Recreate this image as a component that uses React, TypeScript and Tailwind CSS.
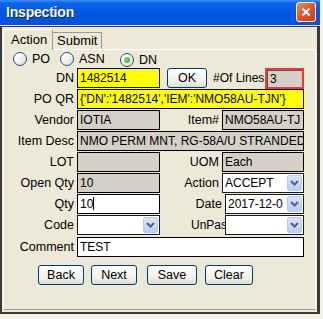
import React from 'react';

const font = { fontFamily: '"Liberation Sans", Arial, sans-serif' };

const Radio = ({ label, checked }: { label: string; checked?: boolean }) => (
  <div className="flex items-center gap-[5px]">
    <div className="w-[14px] h-[14px] rounded-full border border-[#1c5180] bg-[linear-gradient(135deg,#ffffff_20%,#dcd9ce_100%)] flex items-center justify-center">
      {checked && <div className="w-[6px] h-[6px] rounded-full bg-[radial-gradient(circle_at_35%_35%,#7fe07a,#21a121)]" />}
    </div>
    <span className="text-[12.5px] leading-none">{label}</span>
  </div>
);

const Label = ({ text, w }: { text: string; w: string }) => (
  <div className={`${w} text-right pr-[3px] text-[12.5px] leading-[20px] whitespace-nowrap`}>{text}</div>
);

const Box = ({ w, bg, value, cursor }: { w: string; bg: string; value?: string; cursor?: boolean }) => (
  <div className={`${w} h-[20px] ${bg} border border-black pl-[2px] text-[12px] leading-[18px] whitespace-nowrap overflow-hidden`}>
    {value}
    {cursor && <span className="inline-block w-px h-[13px] bg-black align-[-2px]" />}
  </div>
);

const Select = ({ w, value }: { w: string; value?: string }) => (
  <div className={`${w} h-[20px] bg-white border border-[#1a1a1a] flex items-center pl-[2px] pr-px overflow-hidden`}>
    <span className="flex-1 text-[12px] leading-[18px] whitespace-nowrap overflow-hidden">{value}</span>
    <div className="w-[15px] h-[16px] rounded-[2px] bg-[linear-gradient(to_bottom,#d8e4fd,#b8cdf8)] border border-[#b6c9f5] flex items-center justify-center shrink-0">
      <svg width="9" height="6" viewBox="0 0 9 6">
        <path d="M1 1 L4.5 4.5 L8 1" fill="none" stroke="#4d6185" strokeWidth="2" />
      </svg>
    </div>
  </div>
);

const Btn = ({ text, w }: { text: string; w: string }) => (
  <div className={`${w} h-[20px] rounded-[3px] border border-[#003c74] bg-[linear-gradient(to_bottom,#ffffff,#f0efe8_70%,#dcdad0)] text-[12.5px] leading-[18px] text-center`}>
    {text}
  </div>
);

export default function App() {
  return (
    <div className="w-[323px] h-[319px] bg-[#f2f1ea] overflow-hidden text-black" style={font}>
      <div className="w-[320px] h-[314px] flex flex-col bg-[#ece9d8]">
        {/* Title bar */}
        <div className="h-[25px] shrink-0 flex items-center justify-between pl-[6px] pr-[4px] bg-[linear-gradient(to_bottom,#3d8ff6_0%,#0f63ea_12%,#0058e6_45%,#0056e2_85%,#0a4fd0_100%)]">
          <span className="text-white font-bold text-[14px] tracking-[-0.2px] [text-shadow:1px_1px_0_#0a1f5c]">Inspection</span>
          <div className="w-[20px] h-[20px] rounded-[3px] border border-white bg-[linear-gradient(135deg,#f08a6a,#e0542c_50%,#c63d18)] flex items-center justify-center mb-[2px]">
            <svg width="10" height="10" viewBox="0 0 10 10">
              <path d="M1.5 1.5 L8.5 8.5 M8.5 1.5 L1.5 8.5" stroke="white" strokeWidth="2" />
            </svg>
          </div>
        </div>

        {/* Body */}
        <div className="flex-1 mt-px border-t border-l-2 border-r-[3px] border-b-2 border-[#3a3a3a] pt-px pl-px pr-px pb-[2px] flex flex-col">
          {/* Tabs */}
          <div className="flex items-end h-[21px] shrink-0">
            <div className="w-[50px] h-[21px] bg-[#ece9d8] border-t border-l border-white border-r border-r-[#9a9a9a] text-[13px] leading-[19px] pl-[7px] relative z-10 -mb-px">
              Action
            </div>
            <div className="w-[49px] h-[17px] border-t border-r border-[#9a9a9a] border-l-0 bg-[#ece9d8] text-[13px] leading-[16px] pl-[4px]">
              Submit
            </div>
          </div>

          {/* Panel */}
          <div className="flex-1 border-t border-l border-white border-r border-b border-r-[#ffffff] border-b-[#9a9a9a] flex flex-col">
            {/* Radio row */}
            <div className="h-[18px] pt-[2px] pl-[9px] flex">
              <div className="w-[47px]"><Radio label="PO" /></div>
              <div className="w-[60px]"><Radio label="ASN" /></div>
              <Radio label="DN" checked />
            </div>

            <div className="flex flex-col">
              <div className="flex h-[21px]">
                <Label text="DN" w="w-[73px]" />
                <Box w="w-[83px]" bg="bg-[#ffff00]" value="1482514" />
                <div className="ml-[7px] w-[40px] h-[20px] rounded-[3px] border border-[#003c74] bg-[linear-gradient(to_bottom,#ffffff,#f0efe8_70%,#dcdad0)] text-[12.5px] leading-[18px] text-center">OK</div>
                <span className="ml-[6px] w-[52px] text-[12px] leading-[20px] whitespace-nowrap">#Of Lines</span>
                <div className="w-[39px] h-[21px] border-2 border-[#e8393d] bg-[#d4d0c8]">
                  <div className="h-full border-l border-t border-[#555] pl-[2px] text-[12px] leading-[16px]">3</div>
                </div>
              </div>

              <div className="flex h-[21px]">
                <Label text="PO QR" w="w-[73px]" />
                <Box w="w-[227px]" bg="bg-[#ffff00]" value="{'DN':'1482514','IEM':'NMO58AU-TJN'}" />
              </div>

              <div className="flex h-[21px]">
                <Label text="Vendor" w="w-[73px]" />
                <Box w="w-[83px]" bg="bg-[#d4d0c8]" value="IOTIA" />
                <Label text="Item#" w="w-[62px]" />
                <Box w="w-[82px]" bg="bg-[#d4d0c8]" value="NMO58AU-TJ" />
              </div>

              <div className="flex h-[21px]">
                <Label text="Item Desc" w="w-[73px]" />
                <Box w="w-[227px]" bg="bg-[#d4d0c8]" value="NMO PERM MNT, RG-58A/U STRANDED" />
              </div>

              <div className="flex h-[21px]">
                <Label text="LOT" w="w-[73px]" />
                <Box w="w-[83px]" bg="bg-[#d4d0c8]" />
                <Label text="UOM" w="w-[62px]" />
                <Box w="w-[82px]" bg="bg-[#d4d0c8]" value="Each" />
              </div>

              <div className="flex h-[21px]">
                <Label text="Open Qty" w="w-[73px]" />
                <Box w="w-[83px]" bg="bg-[#d4d0c8]" value="10" />
                <Label text="Action" w="w-[62px]" />
                <Select w="w-[82px]" value="ACCEPT" />
              </div>

              <div className="flex h-[21px]">
                <Label text="Qty" w="w-[73px]" />
                <Box w="w-[83px]" bg="bg-white" value="10" cursor />
                <Label text="Date" w="w-[65px]" />
                <Select w="w-[79px]" value="2017-12-0" />
              </div>

              <div className="flex h-[22px]">
                <Label text="Code" w="w-[73px]" />
                <Select w="w-[83px]" />
                <div className="w-[65px] pl-[31px] text-[12px] leading-[20px] whitespace-nowrap">UnPas</div>
                <Select w="w-[79px]" />
              </div>

              <div className="flex h-[21px]">
                <Label text="Comment" w="w-[73px]" />
                <Box w="w-[227px]" bg="bg-white" value="TEST" />
              </div>
            </div>

            {/* Buttons */}
            <div className="flex mt-[7px] pl-[34px]">
              <Btn text="Back" w="w-[46px]" />
              <div className="ml-[7px]"><Btn text="Next" w="w-[46px]" /></div>
              <div className="ml-[10px]"><Btn text="Save" w="w-[50px]" /></div>
              <div className="ml-[8px]"><Btn text="Clear" w="w-[48px]" /></div>
            </div>
          </div>
        </div>
      </div>
    </div>
  );
}
